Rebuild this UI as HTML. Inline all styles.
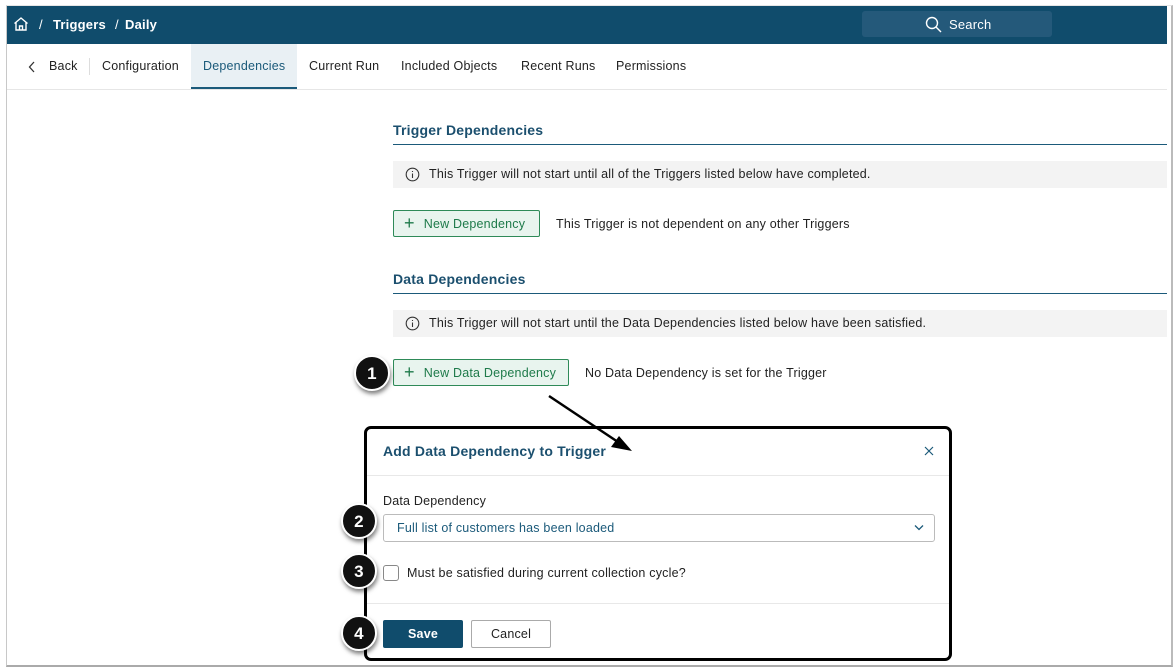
<!DOCTYPE html>
<html><head><meta charset="utf-8"><style>
*{box-sizing:border-box;margin:0;padding:0}
body{width:1174px;height:669px;background:#fff;font-family:"Liberation Sans",sans-serif;font-size:12.5px;letter-spacing:0.2px;color:#222;position:relative;overflow:hidden}
.a{position:absolute}
.frame{left:6px;top:5px;width:1167px;height:662px;border:1px solid #c8c8c8;border-top-color:#e6e6e6;border-bottom:2px solid #aaa;border-right:2px solid #bbb}
.hdr{left:7px;top:6px;width:1160px;height:38px;background:#104c6c;color:#fff}
.tab{top:44px;height:45px;line-height:45px;font-size:12.5px;color:#222}
.h{font-size:14px;font-weight:bold;color:#1b4f6e}
.line{height:1px;background:#1b5a7a}
.info{background:#f3f3f3;height:27px;line-height:27px;color:#222}
.btn{border:1px solid #2e8a58;background:#e8f4ee;color:#1e7a4a;border-radius:2px;height:27px;line-height:25px;padding-left:10px}
.pl{font-size:18px;font-weight:300;margin-right:9px;vertical-align:-1px}
.num{width:36px;height:36px;border-radius:50%;background:#111;color:#fff;font-weight:bold;font-size:17px;text-align:center;line-height:34px;border:2px solid #fff;box-shadow:1px 3px 4px rgba(0,0,0,.5)}
</style></head><body>
<div class="a frame"></div>
<div class="a hdr">
 <svg class="a" style="left:6px;top:10px" width="16" height="16" viewBox="0 0 16 16" fill="none" stroke="#fff" stroke-width="1.4"><path d="M1.5 7.5L8 2l6.5 5.5M3 6.5V14h10V6.5M6.5 14V10h3v4"/></svg>
 <span class="a" style="left:32px;top:11px;font-size:13px">/</span>
 <span class="a" style="left:46px;top:11px;font-size:13px;font-weight:bold">Triggers</span>
 <span class="a" style="left:108px;top:11px;font-size:13px">/</span>
 <span class="a" style="left:118px;top:11px;font-size:13px;font-weight:bold">Daily</span>
 <div class="a" style="left:855px;top:5px;width:190px;height:26px;background:#24597a;border-radius:3px"></div>
 <svg class="a" style="left:918px;top:10px" width="17" height="17" viewBox="0 0 17 17" fill="none" stroke="#fff" stroke-width="1.4"><circle cx="7" cy="7" r="5.5"/><path d="M11 11l5 5"/></svg>
 <span class="a" style="left:942px;top:11px;font-size:13px">Search</span>
</div>
<div class="a" style="left:7px;top:89px;width:1160px;height:1px;background:#e6e6e6"></div>
<svg class="a" style="left:28px;top:61px" width="8" height="12" viewBox="0 0 8 12" fill="none" stroke="#333" stroke-width="1.3"><path d="M6 1L1.5 6 6 11"/></svg>
<span class="a tab" style="left:49px">Back</span>
<div class="a" style="left:89px;top:58px;width:1px;height:17px;background:#ddd"></div>
<span class="a tab" style="left:102px">Configuration</span>
<div class="a" style="left:191px;top:44px;width:106px;height:45px;background:#e9f0f4;border-bottom:2px solid #1b5a7a"></div>
<span class="a tab" style="left:203px;color:#1b5a7a">Dependencies</span>
<span class="a tab" style="left:309px">Current Run</span>
<span class="a tab" style="left:401px">Included Objects</span>
<span class="a tab" style="left:521px">Recent Runs</span>
<span class="a tab" style="left:616px">Permissions</span>

<span class="a h" style="left:393px;top:122px">Trigger Dependencies</span>
<div class="a line" style="left:393px;top:144px;width:774px"></div>
<div class="a info" style="left:393px;top:161px;width:774px;padding-left:36px">This Trigger will not start until all of the Triggers listed below have completed.</div>
<svg class="a" style="left:405px;top:167px" width="15" height="15" viewBox="0 0 15 15" fill="none" stroke="#333" stroke-width="1.1"><circle cx="7.5" cy="7.5" r="6.3"/><path d="M7.5 6.5v4.5M7.5 4v1"/></svg>
<div class="a btn" style="left:393px;top:210px;width:147px"><span class="pl">+</span>New Dependency</div>
<span class="a" style="left:556px;top:217px">This Trigger is not dependent on any other Triggers</span>

<span class="a h" style="left:393px;top:271px">Data Dependencies</span>
<div class="a line" style="left:393px;top:293px;width:774px"></div>
<div class="a info" style="left:393px;top:310px;width:774px;padding-left:36px">This Trigger will not start until the Data Dependencies listed below have been satisfied.</div>
<svg class="a" style="left:405px;top:316px" width="15" height="15" viewBox="0 0 15 15" fill="none" stroke="#333" stroke-width="1.1"><circle cx="7.5" cy="7.5" r="6.3"/><path d="M7.5 6.5v4.5M7.5 4v1"/></svg>
<div class="a btn" style="left:393px;top:359px;width:176px"><span class="pl">+</span>New Data Dependency</div>
<span class="a" style="left:585px;top:366px">No Data Dependency is set for the Trigger</span>

<div class="a" style="left:364px;top:426px;width:588px;height:235px;border:3px solid #000;border-radius:7px;background:#fff"></div>
<div class="a" style="left:367px;top:475px;width:582px;height:1px;background:#e8e8e8"></div>
<div class="a" style="left:367px;top:603px;width:582px;height:1px;background:#e8e8e8"></div>
<span class="a h" style="left:383px;top:443px;font-size:14px">Add Data Dependency to Trigger</span>
<svg class="a" style="left:924px;top:446px" width="10" height="10" viewBox="0 0 10 10" stroke="#1b5a7a" stroke-width="1.2"><path d="M1 1l8 8M9 1l-8 8"/></svg>
<span class="a" style="left:383px;top:494px">Data Dependency</span>
<div class="a" style="left:383px;top:514px;width:552px;height:28px;border:1px solid #bbb;border-radius:3px;color:#1b5a7a;line-height:26px;padding-left:13px">Full list of customers has been loaded</div>
<svg class="a" style="left:914px;top:524px" width="10" height="7" viewBox="0 0 10 7" fill="none" stroke="#1b5a7a" stroke-width="1.3"><path d="M1 1.5l4 4 4-4"/></svg>
<div class="a" style="left:383px;top:565px;width:16px;height:16px;border:1px solid #888;border-radius:3px"></div>
<span class="a" style="left:407px;top:566px">Must be satisfied during current collection cycle?</span>
<div class="a" style="left:383px;top:620px;width:80px;height:28px;background:#104c6c;border-radius:2px;color:#fff;font-weight:bold;text-align:center;line-height:28px">Save</div>
<div class="a" style="left:471px;top:620px;width:80px;height:28px;border:1px solid #aaa;border-radius:2px;text-align:center;line-height:26px">Cancel</div>

<svg class="a" style="left:0;top:0" width="1174" height="669"><path d="M549 396L621 444" stroke="#000" stroke-width="2.5"/><path d="M632 451L611 447 619 436z" fill="#000"/></svg>
<div class="a num" style="left:354px;top:355px">1</div>
<div class="a num" style="left:341px;top:503px">2</div>
<div class="a num" style="left:341px;top:553px">3</div>
<div class="a num" style="left:341px;top:615px">4</div>
</body></html>
